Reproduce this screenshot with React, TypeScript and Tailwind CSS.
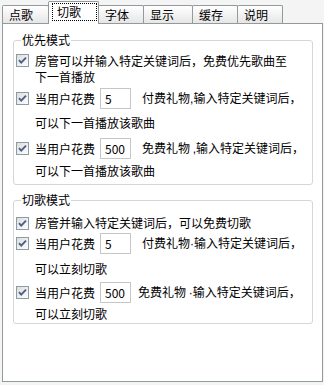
import type { ReactNode } from "react";

const FONT = { fontFamily: '"Noto Sans CJK SC", "Noto Sans", sans-serif' };
const LATIN = { fontFamily: '"Liberation Sans", sans-serif' };

const TABS = [
  { label: "点歌", w: "w-[47px]" },
  { label: "切歌", w: "w-[51px]", active: true },
  { label: "字体", w: "w-[46px]" },
  { label: "显示", w: "w-[50px]" },
  { label: "缓存", w: "w-[46px]" },
  { label: "说明", w: "w-[46px]" },
];

function CheckBox() {
  return (
    <svg width="13" height="13" viewBox="0 0 13 13" className="shrink-0">
      <defs>
        <linearGradient id="cbg" x1="0" y1="0" x2="1" y2="1">
          <stop offset="0" stopColor="#dcdcd6" />
          <stop offset="1" stopColor="#ffffff" />
        </linearGradient>
      </defs>
      <rect x="0.5" y="0.5" width="12" height="12" fill="url(#cbg)" stroke="#8e9aa6" />
      <path d="M3 6.2 L5.2 8.6 L10 3.6" fill="none" stroke="#4b5f8c" strokeWidth="1.9" />
    </svg>
  );
}

function NumBox({ value }: { value: string }) {
  return (
    <div className="ml-[5px] flex h-[21px] w-[31px] shrink-0 items-center border border-[#c6c6c6] bg-white pl-[4px] text-[12px] leading-none text-black">
      {value}
    </div>
  );
}

function Group({ title, className, children }: { title: string; className: string; children: ReactNode }) {
  return (
    <fieldset className={`ml-[10px] w-[300px] rounded-[3px] border border-[#d6d6d6] pl-[2px] ${className}`}>
      <legend className="ml-[5px] px-[1px] text-[12px] leading-[14px] text-black">{title}</legend>
      {children}
    </fieldset>
  );
}

function FeeRow({ amount, head, sep, rest, gap, className }: { amount: string; head: string; sep: string; rest: string; gap: string; className: string }) {
  return (
    <div className={`flex h-[21px] items-center whitespace-nowrap ${className}`}>
      <CheckBox />
      <span className="ml-[6px] text-[12px] leading-[14px]">当用户花费</span>
      <NumBox value={amount} />
      <span className={`text-[12px] leading-[14px] ${gap}`}>
        {head}
        <span style={LATIN}>{sep}</span>
        {rest}
      </span>
    </div>
  );
}

function SubLine({ text, className }: { text: string; className: string }) {
  return <div className={`pl-[19px] text-[12px] leading-[14px] whitespace-nowrap ${className}`}>{text}</div>;
}

export default function App() {
  return (
    <div className="h-[385px] w-[324px] bg-[#f4f4f4] px-[2px] pt-[1px] text-black" style={FONT}>
      <div className="flex h-[22px] items-end pl-[1px]">
        {TABS.map((t) =>
          t.active ? (
            <div
              key={t.label}
              className={`relative z-10 -mb-px -ml-px flex h-[23px] ${t.w} rounded-t-[2px] border border-b-0 border-[#919b9c] bg-white pl-[3px] pt-[1px]`}
            >
              <span className="h-[18px] w-[45px] border border-dotted border-black pl-[4px] text-[12px] leading-[15px]">
                {t.label}
              </span>
            </div>
          ) : (
            <div
              key={t.label}
              className={`-ml-px h-[18px] ${t.w} rounded-t-[2px] border border-b-0 border-[#919b9c] bg-gradient-to-b from-white to-[#e6e6e6] pl-[6px] pt-[1px] text-[12px] leading-[15px]`}
            >
              {t.label}
            </div>
          )
        )}
      </div>

      <div className="h-[359px] w-[321px] border border-[#919b9c] bg-white pt-px">
        <Group title="优先模式" className="mt-[8px] pb-[6px]">
          <div className="mt-[6px] flex items-start whitespace-nowrap">
            <div className="mt-[1px]">
              <CheckBox />
            </div>
            <div className="ml-[6px] text-[12px] leading-[16px]">
              <div>房管可以并输入特定关键词后，免费优先歌曲至</div>
              <div>下一首播放</div>
            </div>
          </div>
          <FeeRow amount="5" head="付费礼物" sep="," rest="输入特定关键词后，" gap="ml-[11px]" className="mt-[3px]" />
          <SubLine text="可以下一首播放该歌曲" className="mt-[7px]" />
          <FeeRow amount="500" head="免费礼物 " sep="," rest="输入特定关键词后，" gap="ml-[11px]" className="mt-[8px]" />
          <SubLine text="可以下一首播放该歌曲" className="mt-[5px]" />
        </Group>

        <Group title="切歌模式" className="mt-[8px] pb-[2px]">
          <div className="mt-[9px] flex h-[14px] items-center whitespace-nowrap">
            <CheckBox />
            <span className="ml-[6px] text-[12px] leading-[14px]">房管并输入特定关键词后，可以免费切歌</span>
          </div>
          <FeeRow amount="5" head="付费礼物" sep="·" rest="输入特定关键词后，" gap="ml-[11px]" className="mt-[3px]" />
          <SubLine text="可以立刻切歌" className="mt-[8px]" />
          <FeeRow amount="500" head="免费礼物 " sep="·" rest="输入特定关键词后，" gap="ml-[7px]" className="mt-[6px]" />
          <SubLine text="可以立刻切歌" className="mt-[4px]" />
        </Group>
      </div>
    </div>
  );
}
